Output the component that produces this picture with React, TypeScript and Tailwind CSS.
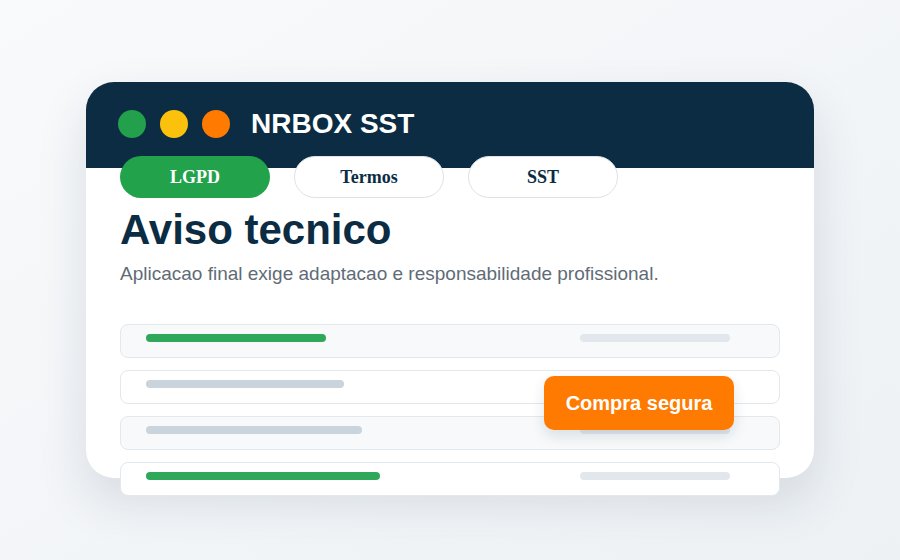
import React from 'react';

const tabs = [
  { label: 'LGPD', active: true },
  { label: 'Termos', active: false },
  { label: 'SST', active: false },
];

const rows = [
  { bar: 'w-[180px] bg-[#2fa85a]', tone: 'bg-[#f7f9fa]' },
  { bar: 'w-[198px] bg-[#c9d4dd]', tone: 'bg-white' },
  { bar: 'w-[216px] bg-[#c9d4dd]', tone: 'bg-[#f7f9fa]' },
  { bar: 'w-[234px] bg-[#2fa85a]', tone: 'bg-white' },
];

export default function App() {
  return (
    <div className="w-[900px] h-[560px] overflow-hidden bg-gradient-to-br from-[#f9fafc] to-[#edf1f4] pt-[82px] pl-[86px]">
      <div className="relative w-[728px] h-[396px] rounded-[28px] bg-white shadow-[0_22px_50px_rgba(20,45,70,0.13)]">
        <div className="h-[86px] rounded-t-[28px] bg-[#0b2c42] flex items-center pl-[32px] pb-[2px]">
          <div className="flex items-center gap-[14px]">
            <span className="w-[28px] h-[28px] rounded-full bg-[#22a04b]" />
            <span className="w-[28px] h-[28px] rounded-full bg-[#fcc10c]" />
            <span className="w-[28px] h-[28px] rounded-full bg-[#ff7a00]" />
          </div>
          <h1 className="ml-[21px] text-white font-bold text-[28px] leading-none font-['Liberation_Sans',Arial,sans-serif]">
            NRBOX SST
          </h1>
        </div>

        <div className="px-[34px] -mt-[12px]">
          <div className="flex gap-[24px]">
            {tabs.map((t) => (
              <div
                key={t.label}
                className={
                  t.active
                    ? 'w-[150px] h-[42px] rounded-full bg-[#22a24b] text-white flex items-center justify-center font-bold text-[18px] font-["Liberation_Serif",serif]'
                    : 'w-[150px] h-[42px] rounded-full bg-white border border-[#dde3e8] text-[#0b2c42] flex items-center justify-center font-bold text-[18px] font-["Liberation_Serif",serif]'
                }
              >
                {t.label}
              </div>
            ))}
          </div>

          <h2 className="mt-[8px] text-[42px] leading-[48px] font-bold text-[#0b2c42] font-['Liberation_Sans',Arial,sans-serif]">
            Aviso tecnico
          </h2>
          <p className="mt-[8px] text-[19px] leading-[24px] text-[#5f6b76] font-['Liberation_Sans',Arial,sans-serif]">
            Aplicacao final exige adaptacao e responsabilidade profissional.
          </p>

          <div className="relative mt-[38px] flex flex-col gap-[12px] w-[660px]">
            {rows.map((r, i) => (
              <div
                key={i}
                className={`h-[34px] rounded-[8px] border border-[#e3e8ec] ${r.tone} flex items-start justify-between pt-[9px] pl-[25px] pr-[49px]`}
              >
                <span className={`h-[8px] rounded-full ${r.bar}`} />
                <span className="w-[150px] h-[8px] rounded-full bg-[#e1e7ec]" />
              </div>
            ))}

            <button className="absolute left-[424px] top-[52px] w-[190px] h-[54px] rounded-[10px] bg-[#ff7a00] text-white font-bold text-[20px] font-['Liberation_Sans',Arial,sans-serif] shadow-[0_6px_14px_rgba(20,45,70,0.12)]">
              Compra segura
            </button>
          </div>
        </div>
      </div>
    </div>
  );
}
